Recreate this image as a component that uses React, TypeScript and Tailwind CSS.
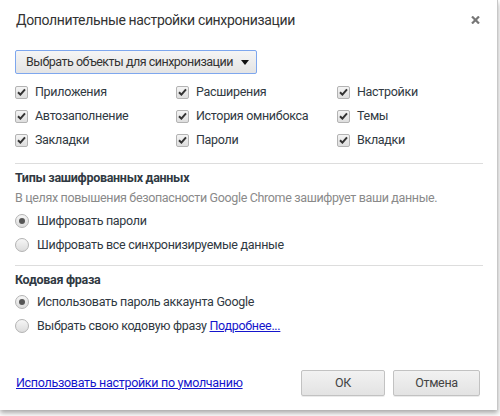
import React from 'react';

const syncItems = [
  ['Приложения', 'Расширения', 'Настройки'],
  ['Автозаполнение', 'История омнибокса', 'Темы'],
  ['Закладки', 'Пароли', 'Вкладки'],
];

const Checkbox = () => (
  <span className="w-[13px] h-[13px] shrink-0 rounded-[2px] border border-[#b3b3b3] bg-gradient-to-b from-[#f4f4f4] to-[#dedede] flex items-center justify-center">
    <svg width="9" height="8" viewBox="0 0 9 8">
      <path d="M1 4.2 L3.4 6.6 L8 1.4" fill="none" stroke="#333" strokeWidth="2" />
    </svg>
  </span>
);

const Radio = ({ checked }: { checked?: boolean }) => (
  <span className="w-[14px] h-[14px] shrink-0 rounded-full border border-[#b3b3b3] bg-gradient-to-b from-[#f6f6f6] to-[#dcdcdc] flex items-center justify-center">
    {checked && <span className="w-[6px] h-[6px] rounded-full bg-[#555]" />}
  </span>
);

const Button = ({ children, className = '' }: { children: React.ReactNode; className?: string }) => (
  <button className={`h-[26px] rounded-[2px] border border-[#c2c2c2] bg-gradient-to-b from-[#f2f2f2] to-[#e3e3e3] shadow-[0_1px_0_rgba(0,0,0,0.08)] text-[#444] ${className}`}>
    {children}
  </button>
);

export default function App() {
  return (
    <div
      className="w-[500px] h-[416px] bg-white overflow-hidden text-[12.5px] tracking-[-0.3px]"
      style={{ fontFamily: 'Roboto, "Noto Sans", sans-serif' }}
    >
      <div className="w-[498px] h-[410px] bg-white border-r border-[#c8c8c8] shadow-[0_3px_5px_rgba(0,0,0,0.35)] flex flex-col">
        {/* header */}
        <div className="flex items-center justify-between pl-4 pr-[17px] pt-[10px] h-[30px]">
          <h1 className="text-[14px] leading-[20px] text-[#333] tracking-[-0.35px]">Дополнительные настройки синхронизации</h1>
          <svg width="9" height="8" viewBox="0 0 9 8" className="mt-[-1px]">
            <path d="M1 0.5 L8 7.5 M8 0.5 L1 7.5" stroke="#777" strokeWidth="2.2" />
          </svg>
        </div>

        <div className="px-[15px]">
          <button className="mt-[20px] w-[242px] h-[24px] rounded-[2px] border border-[#7ea7ee] bg-gradient-to-b from-[#f5f5f5] to-[#e4e4e4] flex items-center justify-between pl-[10px] pr-[7px] text-[#333] whitespace-nowrap">
            <span className="tracking-[-0.5px]">Выбрать объекты для синхронизации</span>
            <svg width="8" height="5" viewBox="0 0 8 5" className="shrink-0">
              <path d="M0 0 H8 L4 5 Z" fill="#111" />
            </svg>
          </button>

          <div className="mt-[6px] grid grid-cols-[161px_161px_1fr]">
            {syncItems.flat().map((label) => (
              <label key={label} className="h-[24px] flex items-center gap-[7px] text-[#303942]">
                <Checkbox />
                <span>{label}</span>
              </label>
            ))}
          </div>

          <div className="mt-[11px] mr-[-1px] h-px bg-[#dddddd]" />

          <h2 className="mt-[6px] h-[16px] leading-[16px] font-bold text-[#303942]">Типы зашифрованных данных</h2>
          <p className="mt-[4px] h-[16px] leading-[16px] text-[#8a8a8a] whitespace-nowrap tracking-[-0.35px]">
            В целях повышения безопасности Google Chrome зашифрует ваши данные.
          </p>
          <div className="mt-[3px]">
            <label className="h-[24px] flex items-center gap-[8px] text-[#303942]">
              <Radio checked />
              <span>Шифровать пароли</span>
            </label>
            <label className="h-[24px] flex items-center gap-[8px] text-[#303942]">
              <Radio />
              <span>Шифровать все синхронизируемые данные</span>
            </label>
          </div>

          <div className="mt-[8px] mr-[-1px] h-px bg-[#dddddd]" />

          <h2 className="mt-[6px] h-[16px] leading-[16px] font-bold text-[#303942]">Кодовая фраза</h2>
          <div className="mt-[2px]">
            <label className="h-[24px] flex items-center gap-[8px] text-[#303942]">
              <Radio checked />
              <span>Использовать пароль аккаунта Google</span>
            </label>
            <label className="h-[24px] flex items-center gap-[8px] text-[#303942]">
              <Radio />
              <span>
                Выбрать свою кодовую фразу <a className="text-[#1515cc] underline">Подробнее...</a>
              </span>
            </label>
          </div>
        </div>

        {/* footer */}
        <div className="mt-auto mb-[14px] flex items-center pl-4 pr-[17px]">
          <a className="text-[#1515cc] underline">Использовать настройки по умолчанию</a>
          <Button className="ml-auto w-[84px]">ОК</Button>
          <Button className="ml-[8px] w-[87px]">Отмена</Button>
        </div>
      </div>
    </div>
  );
}
